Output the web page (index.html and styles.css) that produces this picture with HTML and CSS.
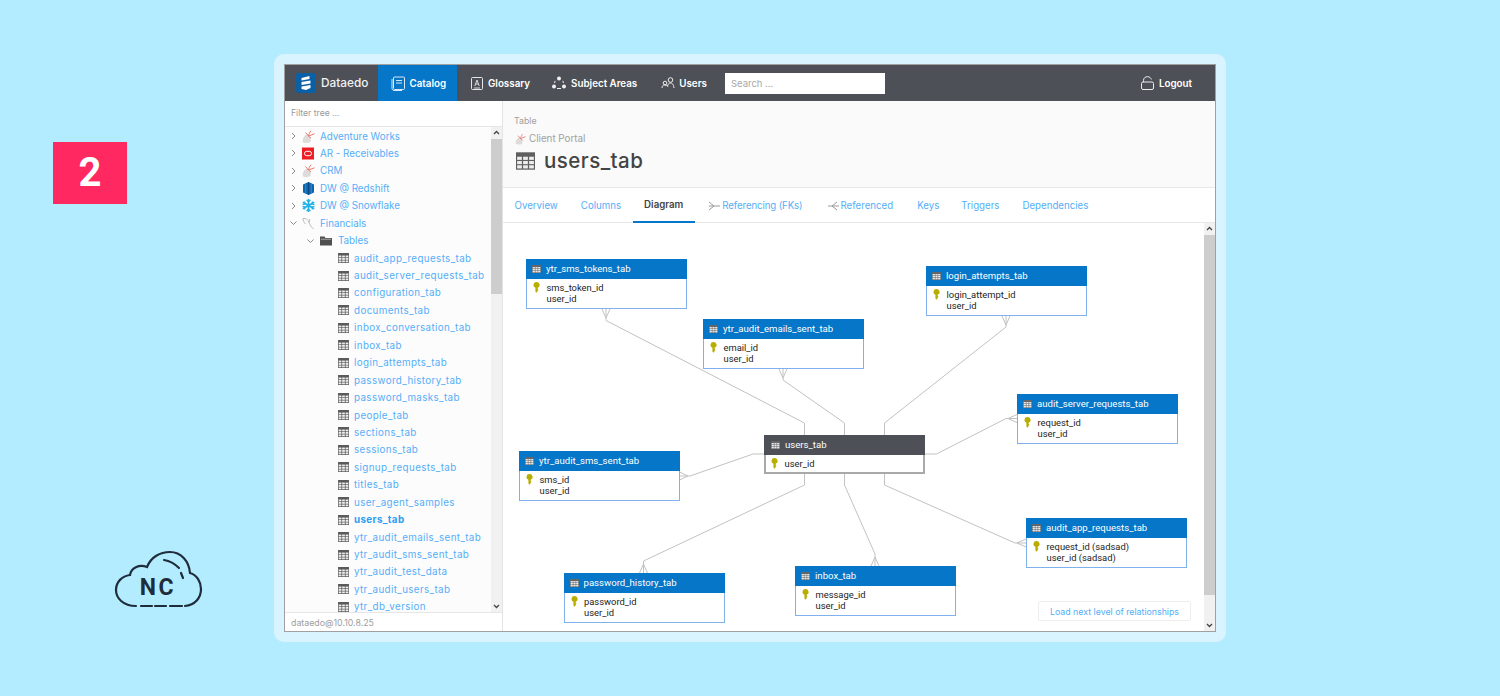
FILE: index.html
```html
<!DOCTYPE html>
<html lang="en">
<head>
<meta charset="utf-8">
<title>Dataedo users_tab diagram</title>
<link rel="stylesheet" href="styles.css">
</head>
<body>
<svg class="defs" width="0" height="0" aria-hidden="true">
  <symbol id="tbl" viewBox="0 0 12 11">
    <rect x="0" y="0" width="12" height="11" fill="currentColor"/>
    <g fill="#ededed">
      <rect x=".7" y="2.800" width="3" height="2"/><rect x="4.500" y="2.800" width="3" height="2"/><rect x="8.300" y="2.800" width="3" height="2"/>
      <rect x=".7" y="5.500" width="3" height="2"/><rect x="4.500" y="5.500" width="3" height="2"/><rect x="8.300" y="5.500" width="3" height="2"/>
      <rect x=".7" y="8.200" width="3" height="2"/><rect x="4.500" y="8.200" width="3" height="2"/><rect x="8.300" y="8.200" width="3" height="2"/>
    </g>
  </symbol>
  <symbol id="key" viewBox="0 0 7 11">
    <path d="M3.500 0a3 3 0 0 1 1.200 5.800V7l.9.700-.9.800v.700l-1.200 1.600-1.100-1.400V5.800A3 3 0 0 1 3.500 0z" fill="#b9ad00"/>
  </symbol>
  <symbol id="chev-r" viewBox="0 0 12 12"><path d="M2 3l3 3-3 3" fill="none" stroke="#8a8a8a" stroke-width="1"/></symbol>
  <symbol id="chev-d" viewBox="0 0 12 12"><path d="M.5 4.500l3 3 3-3" fill="none" stroke="#8a8a8a" stroke-width="1"/></symbol>
  <symbol id="mssql" viewBox="0 0 13 13">
    <path d="M1 12.500c-1-3 .5-6.500 4-8 3 1 4.500 4 3.500 7.500-1.500 1-5.500 1.500-7.500.5z" fill="#dedbdb"/>
    <path d="M3.500 2.500L6.500 6M6.500 6C7 4 7.500 2.500 9 .8M6.500 6l6-2.200M9 8C8 7 7 6.500 6.500 6" fill="none" stroke="#e8776e" stroke-width="1"/>
  </symbol>
  <symbol id="oracle" viewBox="0 0 13 13">
    <rect width="12" height="12" y=".5" fill="#ee1c25"/><rect x="2.500" y="4.300" width="7" height="4.400" rx="2.200" fill="none" stroke="#fff" stroke-width="1"/>
  </symbol>
  <symbol id="redshift" viewBox="0 0 13 13">
    <path d="M1 2.500L6.500 0 12 2.500v8L6.500 13 1 10.500z" fill="#0c64ad"/><path d="M3.800 2v9M9.200 2v9" stroke="#3b8bd0" stroke-width="1"/><path d="M6.500 0v13" stroke="#0a4a85" stroke-width="1"/>
  </symbol>
  <symbol id="snow" viewBox="0 0 13 13">
    <g fill="none" stroke="#1eb2e8" stroke-width="1.700">
      <path d="M6.500 0v13M.8 3.200l11.400 6.600M12.200 3.200L.8 9.800"/>
      <path d="M4.600 1L6.500 3l1.900-2M4.600 12l1.900-2 1.900 2M.6 5.600L3.300 5 2.500 2.500M12.400 7.400L9.700 8l.8 2.500M.6 7.400L3.300 8l-.8 2.500M12.400 5.600L9.700 5l.8-2.500" stroke-width="1.100"/>
    </g>
  </symbol>
  <symbol id="mysql" viewBox="0 0 13 13">
    <path d="M1 1.500c3-.5 5 1 6 4s2 4 4.500 6.500M1 1.500c0 2 1 4 2.500 5.500M7 5.500L8 2" fill="none" stroke="#b9bcc2" stroke-width="1"/>
  </symbol>
  <symbol id="folder" viewBox="0 0 12 11"><path d="M0 1.500h4.500l1 1.500H12v7.500H0z" fill="#4f4f4f"/><path d="M.8 4.200h10.400" stroke="#d0d0d0" stroke-width=".7"/></symbol>
  <symbol id="fk-out" viewBox="0 0 11 10"><path d="M0 5h11M0 1l5 4-5 4" fill="none" stroke="#9a9a9a" stroke-width="1"/></symbol>
  <symbol id="fk-in" viewBox="0 0 11 10"><path d="M0 5h11M9 1L4 5l5 4" fill="none" stroke="#9a9a9a" stroke-width="1"/></symbol>
</svg>

<div class="page">
  <aside class="aside">
    <div class="badge">2</div>
    <svg class="cloud" width="105" height="70" viewBox="0 0 105 70" aria-label="NC logo">
      <g fill="none" stroke="#1f2d3a" stroke-width="2.200" stroke-linecap="round">
        <path d="M31 61C18 61 11 53 11 45C11 37 17 31 25 30C26 23 34 19 42 22C46 12 55 7 65 7C76 7 84 16 85 28C92 30 96 37 96 44C96 53 90 60 80 61"/>
        <path d="M36 61H47M50 61H61M65 61H77"/>
        <path d="M59 15C65 16 70 19 74 23M76 28L78 33"/>
      </g>
      <text class="cloud-text" x="53" y="50" text-anchor="middle">NC</text>
    </svg>
  </aside>

  <section class="card">
    <div class="window">
      <nav class="nav">
        <div class="brand">
          <svg width="20" height="20" viewBox="0 0 20 20"><rect width="20" height="20" rx="2" fill="#0b5fa5"/><path d="M5.500 5l8-2v3l-8 1.500zM5.500 9l9-1.500v3l-9 1.500zM5.500 13.500l9-1.500v3l-4.500 2-4.500-1z" fill="#fff"/></svg>
          <span>Dataedo</span>
        </div>
        <a class="nav-item active">
          <svg width="14" height="15" viewBox="0 0 14 15"><g fill="none" stroke="#d8e9f7" stroke-width="1"><rect x="2.500" y="1" width="11" height="12.500" rx="1"/><path d="M1 3v9.500C1 13.500 2 14.500 3 14.500h8M5 4.500h6M5 7h6"/></g></svg>
          <span>Catalog</span>
        </a>
        <a class="nav-item glossary">
          <svg width="12" height="13" viewBox="0 0 12 13"><rect x=".5" y=".5" width="11" height="12" rx="1" fill="none" stroke="#e6e6e6"/><path d="M3.800 9L6 3l2.200 6M4.600 7h2.800M3 11h6" fill="none" stroke="#e6e6e6" stroke-width=".9"/></svg>
          <span>Glossary</span>
        </a>
        <a class="nav-item areas">
          <svg width="14" height="14" viewBox="0 0 14 14"><g fill="#f0f0f0"><circle cx="7" cy="2.500" r="2"/><circle cx="2" cy="10.500" r="2"/><circle cx="12" cy="10.500" r="2"/></g><path d="M3.200 4.800A6 6 0 0 0 2.600 7M10.800 4.800A6 6 0 0 1 11.400 7M5 12.500h4" fill="none" stroke="#f0f0f0"/></svg>
          <span>Subject Areas</span>
        </a>
        <a class="nav-item users">
          <svg width="16" height="12" viewBox="0 0 16 12"><g fill="none" stroke="#eee" stroke-width="1"><circle cx="4" cy="6" r="1.800"/><circle cx="9.500" cy="3" r="2.300"/><path d="M1 11c0-2 1-3 3-3s2.500 1 3 2M6.500 9c.5-2 1.500-3 3-3s3 1 3.500 5"/></g></svg>
          <span>Users</span>
        </a>
        <div class="search">Search ...</div>
        <a class="logout">
          <svg width="13" height="14" viewBox="0 0 13 14"><g fill="none" stroke="#eee" stroke-width="1"><rect x=".5" y="6" width="12" height="7.500" rx="1.500"/><path d="M2.500 6V4.500C2.500 2 4.300.7 6.500.7S10 2 10.300 3.500"/></g></svg>
          <span>Logout</span>
        </a>
      </nav>

      <div class="body">
        <aside class="sidebar">
          <div class="filter">Filter tree ...</div>
          <div class="tree-wrap">
            <ul class="tree">
              <li class="row l0"><svg class="chev"><use href="#chev-r"/></svg><svg class="ico"><use href="#mssql"/></svg><a>Adventure Works</a></li>
              <li class="row l0"><svg class="chev"><use href="#chev-r"/></svg><svg class="ico"><use href="#oracle"/></svg><a>AR - Receivables</a></li>
              <li class="row l0"><svg class="chev"><use href="#chev-r"/></svg><svg class="ico"><use href="#mssql"/></svg><a>CRM</a></li>
              <li class="row l0"><svg class="chev"><use href="#chev-r"/></svg><svg class="ico"><use href="#redshift"/></svg><a>DW @ Redshift</a></li>
              <li class="row l0"><svg class="chev"><use href="#chev-r"/></svg><svg class="ico"><use href="#snow"/></svg><a>DW @ Snowflake</a></li>
              <li class="row l0"><svg class="chev"><use href="#chev-d"/></svg><svg class="ico"><use href="#mysql"/></svg><a>Financials</a></li>
              <li class="row l1"><svg class="chev"><use href="#chev-d"/></svg><svg class="ico-f"><use href="#folder"/></svg><a>Tables</a></li>
              <li class="row l2"><svg class="ico-t"><use href="#tbl"/></svg><a>audit_app_requests_tab</a></li>
              <li class="row l2"><svg class="ico-t"><use href="#tbl"/></svg><a>audit_server_requests_tab</a></li>
              <li class="row l2"><svg class="ico-t"><use href="#tbl"/></svg><a>configuration_tab</a></li>
              <li class="row l2"><svg class="ico-t"><use href="#tbl"/></svg><a>documents_tab</a></li>
              <li class="row l2"><svg class="ico-t"><use href="#tbl"/></svg><a>inbox_conversation_tab</a></li>
              <li class="row l2"><svg class="ico-t"><use href="#tbl"/></svg><a>inbox_tab</a></li>
              <li class="row l2"><svg class="ico-t"><use href="#tbl"/></svg><a>login_attempts_tab</a></li>
              <li class="row l2"><svg class="ico-t"><use href="#tbl"/></svg><a>password_history_tab</a></li>
              <li class="row l2"><svg class="ico-t"><use href="#tbl"/></svg><a>password_masks_tab</a></li>
              <li class="row l2"><svg class="ico-t"><use href="#tbl"/></svg><a>people_tab</a></li>
              <li class="row l2"><svg class="ico-t"><use href="#tbl"/></svg><a>sections_tab</a></li>
              <li class="row l2"><svg class="ico-t"><use href="#tbl"/></svg><a>sessions_tab</a></li>
              <li class="row l2"><svg class="ico-t"><use href="#tbl"/></svg><a>signup_requests_tab</a></li>
              <li class="row l2"><svg class="ico-t"><use href="#tbl"/></svg><a>titles_tab</a></li>
              <li class="row l2"><svg class="ico-t"><use href="#tbl"/></svg><a>user_agent_samples</a></li>
              <li class="row l2 current"><svg class="ico-t"><use href="#tbl"/></svg><a>users_tab</a></li>
              <li class="row l2"><svg class="ico-t"><use href="#tbl"/></svg><a>ytr_audit_emails_sent_tab</a></li>
              <li class="row l2"><svg class="ico-t"><use href="#tbl"/></svg><a>ytr_audit_sms_sent_tab</a></li>
              <li class="row l2"><svg class="ico-t"><use href="#tbl"/></svg><a>ytr_audit_test_data</a></li>
              <li class="row l2"><svg class="ico-t"><use href="#tbl"/></svg><a>ytr_audit_users_tab</a></li>
              <li class="row l2"><svg class="ico-t"><use href="#tbl"/></svg><a>ytr_db_version</a></li>
            </ul>
            <div class="scrollbar side-bar">
              <div class="sb-btn"><svg width="11" height="12" viewBox="0 0 11 12"><path d="M3 7l2.500-2.500L8 7" fill="none" stroke="#444" stroke-width="1.300"/></svg></div>
              <div class="sb-thumb"></div>
              <div class="sb-track"></div>
              <div class="sb-btn"><svg width="11" height="12" viewBox="0 0 11 12"><path d="M3 5l2.500 2.500L8 5" fill="none" stroke="#444" stroke-width="1.300"/></svg></div>
            </div>
          </div>
          <div class="footer">dataedo@10.10.8.25</div>
        </aside>

        <main class="main">
          <header class="head">
            <div class="crumb-type">Table</div>
            <div class="crumb-db"><svg width="11" height="12"><use href="#mssql"/></svg><span>Client Portal</span></div>
            <h1 class="title"><svg class="title-ico" width="19" height="18"><use href="#tbl"/></svg><span>users_tab</span></h1>
          </header>
          <div class="tabs">
            <a class="tab">Overview</a>
            <a class="tab">Columns</a>
            <a class="tab on">Diagram</a>
            <a class="tab ref-out"><svg width="11" height="10"><use href="#fk-out"/></svg>Referencing (FKs)</a>
            <a class="tab ref-in"><svg width="11" height="10"><use href="#fk-in"/></svg>Referenced</a>
            <a class="tab keys">Keys</a>
            <a class="tab">Triggers</a>
            <a class="tab">Dependencies</a>
          </div>
          <div class="diagram-wrap">
            <div class="canvas">
              <svg class="links" width="701" height="409" viewBox="503 223 701 409">
                <g fill="none" stroke="#c2c2c2" stroke-width="1">
                  <path d="M606 309V320.500L804.500 423V435M602 309L606 318L610 309"/>
                  <path d="M783 369V380L844.500 423V435M779 369L783 378L787 369"/>
                  <path d="M1006 316V327L884.500 423V435M1002 316L1006 325L1010 316"/>
                  <path d="M925 454H936.500L1006 418.500H1017M1017 414.500L1008 418.500L1017 422.500"/>
                  <path d="M884.500 473V485L1015 543H1026M1026 539L1017 543L1026 547"/>
                  <path d="M844.500 473V485L875 554V566M871 566L875 557L879 566"/>
                  <path d="M804.500 473V485L643.500 561V573M639.500 573L643.500 564L647.500 573"/>
                  <path d="M764 454H753L690 476H679.500M679.500 472L688 476L679.500 480"/>
                </g>
              </svg>

              <div class="node n-sms"><div class="nh"><svg class="nt"><use href="#tbl"/></svg>ytr_sms_tokens_tab</div><div class="nb"><div class="nr"><svg class="nk"><use href="#key"/></svg>sms_token_id</div><div class="nr">user_id</div></div></div>
              <div class="node n-emails"><div class="nh"><svg class="nt"><use href="#tbl"/></svg>ytr_audit_emails_sent_tab</div><div class="nb"><div class="nr"><svg class="nk"><use href="#key"/></svg>email_id</div><div class="nr">user_id</div></div></div>
              <div class="node n-login"><div class="nh"><svg class="nt"><use href="#tbl"/></svg>login_attempts_tab</div><div class="nb"><div class="nr"><svg class="nk"><use href="#key"/></svg>login_attempt_id</div><div class="nr">user_id</div></div></div>
              <div class="node n-server"><div class="nh"><svg class="nt"><use href="#tbl"/></svg>audit_server_requests_tab</div><div class="nb"><div class="nr"><svg class="nk"><use href="#key"/></svg>request_id</div><div class="nr">user_id</div></div></div>
              <div class="node n-users"><div class="nh"><svg class="nt"><use href="#tbl"/></svg>users_tab</div><div class="nb"><div class="nr"><svg class="nk"><use href="#key"/></svg>user_id</div></div></div>
              <div class="node n-smssent"><div class="nh"><svg class="nt"><use href="#tbl"/></svg>ytr_audit_sms_sent_tab</div><div class="nb"><div class="nr"><svg class="nk"><use href="#key"/></svg>sms_id</div><div class="nr">user_id</div></div></div>
              <div class="node n-pass"><div class="nh"><svg class="nt"><use href="#tbl"/></svg>password_history_tab</div><div class="nb"><div class="nr"><svg class="nk"><use href="#key"/></svg>password_id</div><div class="nr">user_id</div></div></div>
              <div class="node n-inbox"><div class="nh"><svg class="nt"><use href="#tbl"/></svg>inbox_tab</div><div class="nb"><div class="nr"><svg class="nk"><use href="#key"/></svg>message_id</div><div class="nr">user_id</div></div></div>
              <div class="node n-app"><div class="nh"><svg class="nt"><use href="#tbl"/></svg>audit_app_requests_tab</div><div class="nb"><div class="nr"><svg class="nk"><use href="#key"/></svg>request_id (sadsad)</div><div class="nr">user_id (sadsad)</div></div></div>

              <button class="load">Load next level of relationships</button>
            </div>
            <div class="scrollbar main-bar">
              <div class="sb-btn"><svg width="11" height="12" viewBox="0 0 11 12"><path d="M3 7l2.500-2.500L8 7" fill="none" stroke="#444" stroke-width="1.300"/></svg></div>
              <div class="sb-thumb"></div>
              <div class="sb-track"></div>
              <div class="sb-btn"><svg width="11" height="12" viewBox="0 0 11 12"><path d="M3 5l2.500 2.500L8 5" fill="none" stroke="#444" stroke-width="1.300"/></svg></div>
            </div>
          </div>
        </main>
      </div>
    </div>
  </section>
</div>
</body>
</html>
```

FILE: styles.css
```css
* { box-sizing: border-box; }
html, body { margin: 0; height: 696px; overflow: hidden; }
body { background: #b3ecff; font-family: Inter, "Liberation Sans", sans-serif; color: #333; }
.defs { position: absolute; }
.page { display: flex; height: 696px; }

/* left decoration column */
.aside { width: 274px; padding: 142px 0 0 53px; flex: none; }
.badge {
  width: 74px; height: 62px; background: #ff2860; color: #fff;
  display: flex; align-items: center; justify-content: center;
  font: 700 40px/1 Roboto, sans-serif;
}
.cloud { display: block; margin: 341px 0 0 52px; }
.cloud-text { font: 700 23px Roboto, sans-serif; fill: #1f2d3a; letter-spacing: 2.500px; }

/* card */
.card { margin-top: 54px; width: 952px; height: 588px; padding: 10px; background: #d9f4ff; border-radius: 10px; }
.window { height: 568px; border: 1px solid #a0a0a0; background: #fff; display: flex; flex-direction: column; }

/* top nav */
.nav { height: 36px; flex: none; background: #4d5056; display: flex; align-items: center; color: #fff; }
.brand { width: 93px; padding-left: 11px; display: flex; align-items: center; gap: 5px; font-size: 11.800px; font-weight: 500; color: #f2f2f2; }
.nav-item { height: 36px; display: flex; align-items: center; gap: 5px; padding: 0 11.500px; font-size: 9.800px; font-weight: 600; color: #fff; white-space: nowrap; }
.nav-item.active { background: #0576c8; width: 79px; padding: 0 0 0 13px; gap: 4.500px; }
.nav-item.glossary { padding-left: 14px; }
.nav-item.areas { padding: 0 12.500px 0 10.500px; }
.nav-item.users { gap: 2px; }
.search { width: 160px; height: 21px; margin-left: 6.500px; background: #fff; color: #a8a8a8; font-size: 9.500px; line-height: 21px; padding-left: 6px; }
.logout { margin-left: auto; margin-right: 23px; display: flex; align-items: center; gap: 5px; font-size: 9.800px; font-weight: 600; }

/* body */
.body { flex: 1; min-height: 0; display: flex; }
.sidebar { width: 218px; flex: none; border-right: 1px solid #e4e4e4; display: flex; flex-direction: column; }
.filter { height: 26px; flex: none; border-bottom: 1px solid #e6e6e6; padding-left: 6px; line-height: 24px; font-size: 8.600px; color: #9a9a9a; }
.tree-wrap { flex: 1; min-height: 0; display: flex; background: #fcfcfc; }
.tree { flex: 1; min-width: 0; margin: 0; padding: .3px 0 0; list-style: none; overflow: hidden; }
.row { height: 17.450px; display: flex; align-items: center; font-size: 9.800px; white-space: nowrap; color: #55aef8; }
.row.l0 { padding-left: 5px; }
.row.l1 { padding-left: 22px; }
.row.l2 { padding-left: 53px; letter-spacing: .38px; }
.row.current { font-weight: 700; color: #2b9ef5; }
.chev { width: 12px; height: 12px; flex: none; }
.ico { width: 13px; height: 13px; margin-right: 5px; flex: none; }
.ico-f { width: 12px; height: 11px; margin: 0 6px 0 1px; flex: none; }
.ico-t { width: 11px; height: 10px; margin-right: 5px; flex: none; color: #5a5a5a; }
.footer { height: 19px; flex: none; border-top: 1px solid #e6e6e6; background: #fff; padding-left: 6px; line-height: 20px; font-size: 8.800px; color: #9e9e9e; }

/* scrollbars */
.scrollbar { width: 11px; flex: none; display: flex; flex-direction: column; background: #f1f1f1; }
.sb-btn { height: 12px; flex: none; }
.sb-btn svg { display: block; }
.sb-thumb { background: #cdcdcd; }
.sb-track { flex: 1; }
.side-bar .sb-thumb { height: 155px; }
.main-bar .sb-thumb { height: 360px; }

/* main */
.main { flex: 1; min-width: 0; display: flex; flex-direction: column; }
.head { height: 87px; flex: none; background: #fafafa; border-bottom: 1px solid #e8e8e8; padding: 14px 0 0 11px; }
.crumb-type { font-size: 8.800px; line-height: 12px; color: #a0a0a0; }
.crumb-db { display: flex; align-items: center; gap: 3px; margin-top: 5px; padding-left: 1px; font-size: 9.800px; line-height: 13px; color: #a0a0a0; }
.title { margin: 4px 0 0; display: flex; align-items: center; gap: 9px; font-size: 20.500px; line-height: 24px; font-weight: 500; letter-spacing: .45px; color: #444; }
.title-ico { margin-left: 2px; color: #5f5f5f; }
.tabs { height: 35px; flex: none; border-bottom: 1px solid #e8e8e8; display: flex; font-size: 9.700px; color: #55aef8; white-space: nowrap; }
.tab { height: 35px; padding: 0 11.500px; display: flex; align-items: center; gap: 3px; }
.tab.on { color: #444; font-weight: 600; border-bottom: 2px solid #0576c8; }
.tab.ref-out { padding-left: 14.500px; gap: 2px; letter-spacing: -.12px; }
.tab.ref-in { padding: 0 12.500px 0 13.500px; gap: 2px; }
.tab.keys { padding-right: 10.500px; }

/* diagram */
.diagram-wrap { flex: 1; min-height: 0; display: flex; }
.canvas { position: relative; flex: 1; min-width: 0; overflow: hidden; background: #fff; }
.links { position: absolute; left: 0; top: 0; }
.node {
  position: absolute; width: 161px; height: 50px; background: #fff;
  border: 1px solid #7fb2ec; font-family: Roboto, "Liberation Sans", sans-serif;
}
.nh { height: 20px; margin: -1px -1px 0; padding: 0 0 1px 6px; background: #0576c8; color: #fff; display: flex; align-items: center; font-size: 9.600px; white-space: nowrap; }
.nt { width: 9px; height: 8px; margin-right: 5px; color: #666; flex: none; }
.nb { padding: 2.500px 0 0 19.500px; }
.nr { position: relative; height: 11.500px; line-height: 11.500px; font-size: 9.400px; color: #222; white-space: nowrap; }
.nk { position: absolute; left: -13.500px; top: 0; width: 7px; height: 11px; }
.n-sms { left: 23px; top: 36px; }
.n-emails { left: 200px; top: 96px; }
.n-login { left: 423px; top: 43px; }
.n-server { left: 514px; top: 171px; }
.n-users { left: 261px; top: 212px; height: 39px; border: 2px solid #a9a9a9; }
.n-users .nh { margin: -2px -2px 0; padding-left: 7px; background: #4d5056; }
.n-users .nb { padding-left: 18.500px; }
.n-smssent { left: 16px; top: 228px; }
.n-pass { left: 60.500px; top: 350px; }
.n-inbox { left: 292px; top: 343px; }
.n-app { left: 523px; top: 295px; }
.load {
  position: absolute; left: 535px; top: 378px; width: 153px; height: 20px; padding: 0;
  background: #fff; border: 1px solid #eee; border-radius: 2px;
  font: 8.800px Inter, sans-serif; color: #55aef8;
}
```
